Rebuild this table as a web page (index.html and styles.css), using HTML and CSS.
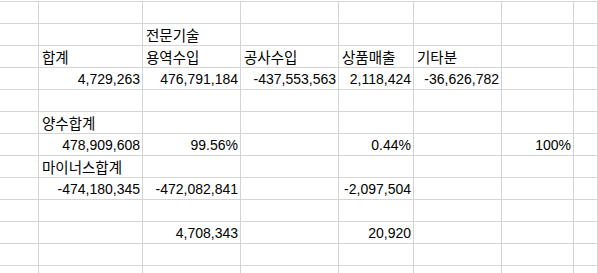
FILE: index.html
```html
<!DOCTYPE html>
<html lang="ko">
<head>
<meta charset="utf-8">
<title>Sheet</title>
<link rel="stylesheet" href="styles.css">
</head>
<body>
<div class="sheet">
  <!-- row 1 -->
  <div class="c"></div><div class="c"></div><div class="c"></div><div class="c"></div><div class="c"></div><div class="c"></div><div class="c"></div><div class="c"></div>
  <!-- row 2 -->
  <div class="c"></div><div class="c"></div><div class="c ko">전문기술</div><div class="c"></div><div class="c"></div><div class="c"></div><div class="c"></div><div class="c"></div>
  <!-- row 3 -->
  <div class="c"></div><div class="c ko">합계</div><div class="c ko">용역수입</div><div class="c ko">공사수입</div><div class="c ko">상품매출</div><div class="c ko">기타분</div><div class="c"></div><div class="c"></div>
  <!-- row 4 -->
  <div class="c"></div><div class="c r">4,729,263</div><div class="c r">476,791,184</div><div class="c r">-437,553,563</div><div class="c r">2,118,424</div><div class="c r">-36,626,782</div><div class="c"></div><div class="c"></div>
  <!-- row 5 -->
  <div class="c"></div><div class="c"></div><div class="c"></div><div class="c"></div><div class="c"></div><div class="c"></div><div class="c"></div><div class="c"></div>
  <!-- row 6 -->
  <div class="c"></div><div class="c ko">양수합계</div><div class="c"></div><div class="c"></div><div class="c"></div><div class="c"></div><div class="c"></div><div class="c"></div>
  <!-- row 7 -->
  <div class="c"></div><div class="c r">478,909,608</div><div class="c r">99.56%</div><div class="c"></div><div class="c r">0.44%</div><div class="c"></div><div class="c r">100%</div><div class="c"></div>
  <!-- row 8 -->
  <div class="c"></div><div class="c ko">마이너스합계</div><div class="c"></div><div class="c"></div><div class="c"></div><div class="c"></div><div class="c"></div><div class="c"></div>
  <!-- row 9 -->
  <div class="c"></div><div class="c r">-474,180,345</div><div class="c r">-472,082,841</div><div class="c"></div><div class="c r">-2,097,504</div><div class="c"></div><div class="c"></div><div class="c"></div>
  <!-- row 10 -->
  <div class="c"></div><div class="c"></div><div class="c"></div><div class="c"></div><div class="c"></div><div class="c"></div><div class="c"></div><div class="c"></div>
  <!-- row 11 -->
  <div class="c"></div><div class="c"></div><div class="c r">4,708,343</div><div class="c"></div><div class="c r">20,920</div><div class="c"></div><div class="c"></div><div class="c"></div>
  <!-- row 12 -->
  <div class="c"></div><div class="c"></div><div class="c"></div><div class="c"></div><div class="c"></div><div class="c"></div><div class="c"></div><div class="c"></div>
  <!-- row 13 -->
  <div class="c"></div><div class="c"></div><div class="c"></div><div class="c"></div><div class="c"></div><div class="c"></div><div class="c"></div><div class="c"></div>
</div>
</body>
</html>
```
FILE: styles.css
```css
html, body {
  margin: 0;
  padding: 0;
  background: #ffffff;
  overflow: hidden;
}

body {
  padding-top: 1px;
  font-family: "Liberation Sans", "Noto Sans CJK KR", sans-serif;
  font-size: 14px;
  color: #000000;
}

.sheet {
  display: grid;
  grid-template-columns: 39px 104px 98px 98px 75px 88px 72px 24px;
  grid-template-rows: repeat(12, 22px) 8px;
  height: 272px;
  overflow: hidden;
}

.c {
  box-sizing: border-box;
  border-top: 1px solid #d4d4d4;
  border-right: 1px solid #d4d4d4;
  padding: 1px 2px 0 2px;
  line-height: 20px;
  white-space: nowrap;
  overflow: visible;
}

.r {
  text-align: right;
}

.ko {
  font-family: "Noto Sans CJK KR", sans-serif;
  font-size: 14.5px;
  padding-left: 3px;
}
```
